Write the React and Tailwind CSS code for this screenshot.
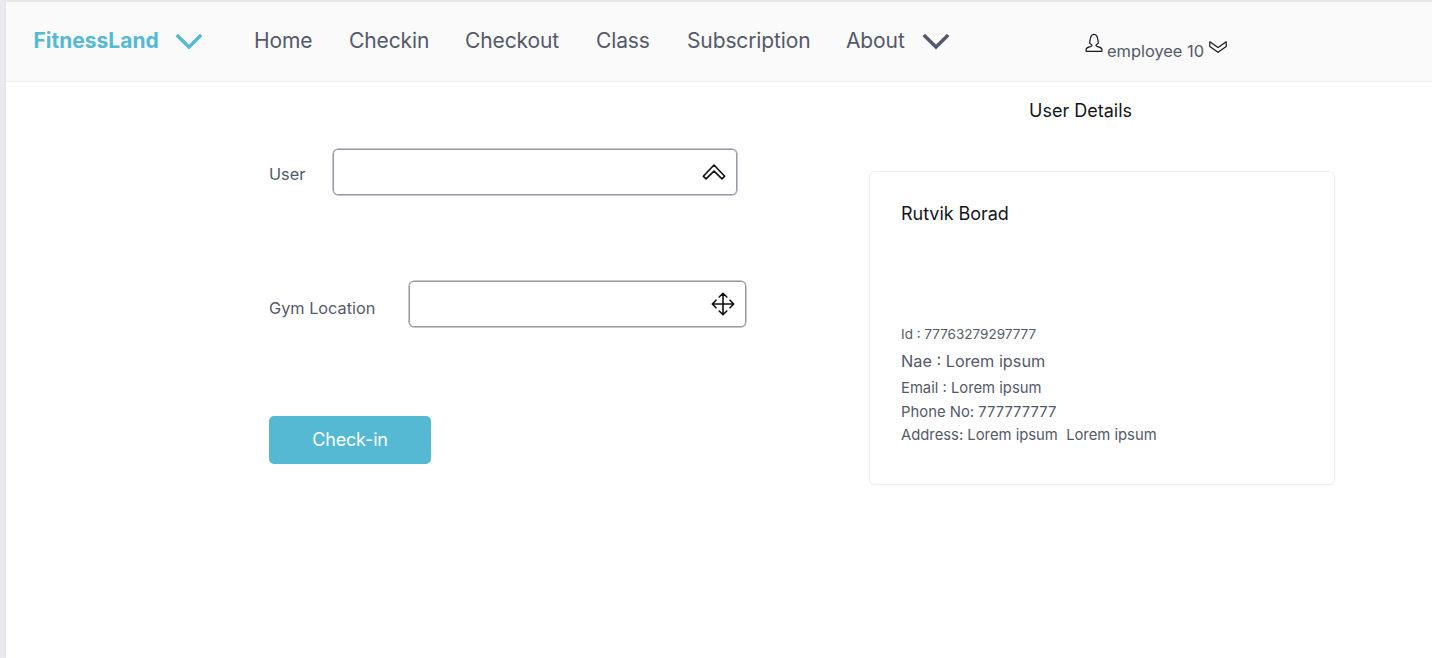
const navItems = [
  { label: "Home", width: "w-[95px]" },
  { label: "Checkin", width: "w-[116px]" },
  { label: "Checkout", width: "w-[131px]" },
  { label: "Class", width: "w-[91px]" },
  { label: "Subscription", width: "w-[159px]" },
  { label: "About", width: "w-[75.5px]" },
];

function Chevron({ className }) {
  return (
    <svg className={className} width="28" height="18" viewBox="0 0 28 18" fill="none" stroke="currentColor" strokeWidth="3.4">
      <path d="M1.8 2 14 14 26.2 2" />
    </svg>
  );
}

function UserIcon() {
  return (
    <svg className="mt-[31px] shrink-0" width="18" height="20" viewBox="0 0 18 20" fill="none" stroke="#18181f" strokeWidth="1.2" strokeLinejoin="round">
      <path d="M7 12.6C7 11.2 4.200 10.800 4.600 9.600C5.400 8 4.300 1.300 9 1.300C13.700 1.300 12.600 8 13.400 9.600C13.800 10.800 11 11.200 11 12.600C11.500 14.200 16.900 13.600 16.900 16.400V18.300H1.100V16.400C1.100 13.600 6.500 14.200 7 12.600Z" />
    </svg>
  );
}

function HollowChevronDown() {
  return (
    <svg className="mt-[38px] shrink-0" width="18" height="14" viewBox="0 0 18 14" fill="none" stroke="#18181f" strokeWidth="1.2" strokeLinejoin="round">
      <path d="M.8 1.8v4.6L9 12.3l8.200-5.900V1.800L9 7.600z" />
    </svg>
  );
}

function HollowChevronUp() {
  return (
    <svg width="24" height="18" viewBox="0 0 24 18" fill="none" stroke="#111115" strokeWidth="1.6" strokeLinejoin="round">
      <path d="M1.300 13.200 12 2l10.700 11.200-2.700 2.600L12 8.200l-8 7.600z" />
    </svg>
  );
}

function MoveIcon() {
  return (
    <svg width="24" height="24" viewBox="0 0 24 24" fill="none" stroke="#111115" strokeWidth="1.6" strokeLinecap="round" strokeLinejoin="round">
      <path d="M12 1.500v21M1.500 12h21M8.200 5 12 1.300 15.800 5M8.200 19l3.800 3.700 3.800-3.700M5 8.200 1.300 12 5 15.800M19 8.200l3.700 3.800-3.700 3.800" />
    </svg>
  );
}

export default function App() {
  return (
    <div className="h-[658px] overflow-hidden bg-[#e9e9ee] pt-[2px] pl-[6px] font-['Inter',sans-serif] text-[#545969]">
      <div className="h-full bg-white shadow-[0_0_3px_rgba(80,80,100,0.06)]">
        <header className="flex h-[80px] border-b border-[#efeff0] bg-[#fafafa]">
          <div className="flex h-[78px] w-[248px] shrink-0 items-center pl-[27.5px] text-[#55b9d3]">
            <span className="w-[141px] text-[21px] font-bold">FitnessLand</span>
            <Chevron className="mt-[2px]" />
          </div>
          <nav className="flex h-[78px] items-center text-[21px] tracking-[-0.12px]">
            {navItems.map((item) => (
              <a key={item.label} className={`${item.width} shrink-0`}>{item.label}</a>
            ))}
            <Chevron className="mt-[2px]" />
          </nav>
          <div className="ml-[135px] flex">
            <UserIcon />
            <span className="mt-[37px] ml-[4.5px] w-[102px] shrink-0 text-[16.4px] leading-6 whitespace-nowrap">employee 10</span>
            <HollowChevronDown />
          </div>
        </header>

        <main className="flex">
          <form className="w-[863px] shrink-0 pt-[66px] pl-[263px]">
            <div className="flex h-[48px] items-center">
              <label className="w-[64px] pt-1 text-[16.3px]">User</label>
              <div className="mb-px flex h-[46px] w-[404px] items-center justify-end rounded-[5px] pr-[11px] shadow-[0_0_0_0.5px_#9092a0,inset_0_0_0_1px_#9899a7]">
                <HollowChevronUp />
              </div>
            </div>
            <div className="mt-[84px] flex h-[48px] items-center">
              <label className="w-[140px] pt-[8px] text-[16.3px]">Gym Location</label>
              <div className="flex h-[46px] w-[337px] items-center justify-end rounded-[5px] pr-[11px] shadow-[0_0_0_0.5px_#8e9299,inset_0_0_0_1px_#959aa0]">
                <MoveIcon />
              </div>
            </div>
            <button type="button" className="mt-[88px] flex h-[48px] w-[162px] items-center justify-center rounded-[5px] bg-[#55b9d3] pb-px text-[18px] tracking-[-0.15px] text-white">Check-in</button>
          </form>

          <section className="w-[466px] shrink-0 pt-[15px] text-[#14141c]">
            <h2 className="pl-[160px] text-[18px] leading-7">User Details</h2>
            <div className="mt-[46px] h-[314px] rounded-[6px] border border-[#eeeeef] pt-[28px] pl-[31px] shadow-[0_1px_2px_rgba(0,0,0,0.04)]">
              <h3 className="text-[18px] leading-7 tracking-[-0.05px]">Rutvik Borad</h3>
              <div className="mt-[94px] text-[#545969]">
                <p className="text-[13.5px] leading-[24px]">Id : 77763279297777</p>
                <p className="mt-[1px] text-[16.3px] leading-[28px]">Nae : Lorem ipsum</p>
                <p className="mt-px text-[14.8px] leading-[25px]">Email : Lorem ipsum</p>
                <p className="text-[14.8px] leading-[23px] tracking-[0.03px]">Phone No: 777777777</p>
                <p className="text-[14.8px] leading-[23px] whitespace-pre">Address: Lorem ipsum  Lorem ipsum</p>
              </div>
            </div>
          </section>
        </main>
      </div>
    </div>
  );
}
